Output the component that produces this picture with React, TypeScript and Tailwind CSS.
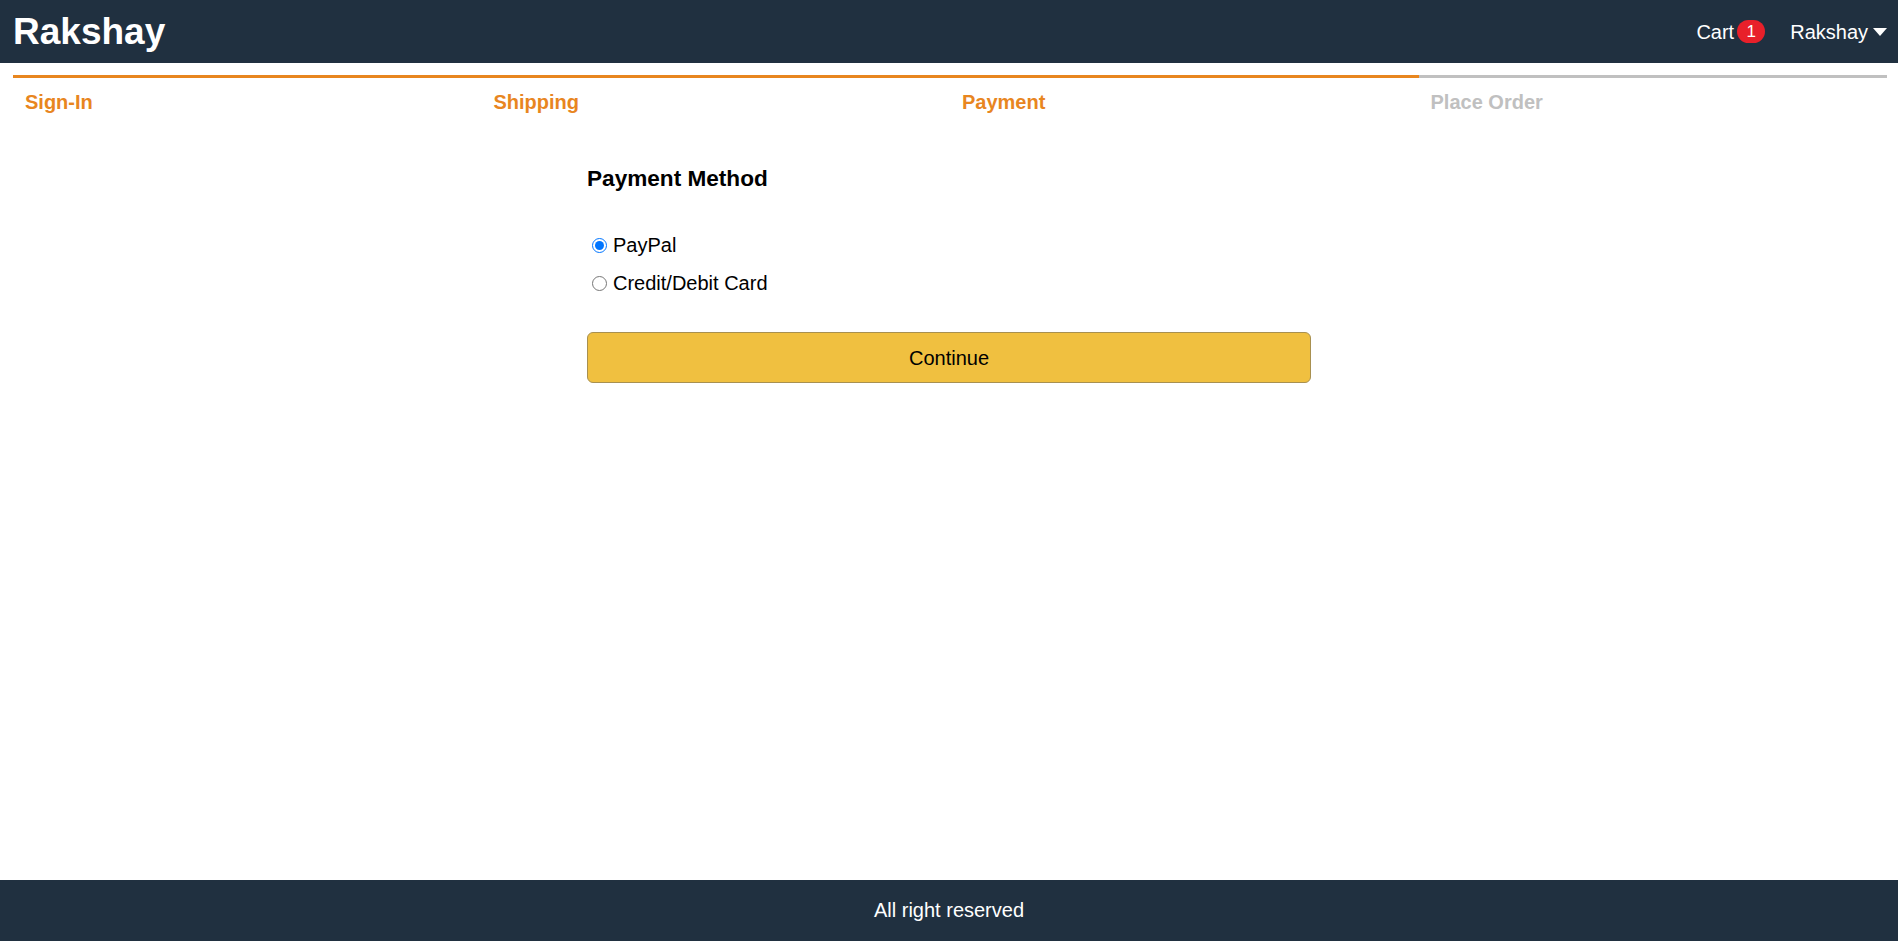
import React, { useState } from 'react';

const steps = [
  { label: 'Sign-In', active: true },
  { label: 'Shipping', active: true },
  { label: 'Payment', active: true },
  { label: 'Place Order', active: false },
];

const App: React.FC = () => {
  const [method, setMethod] = useState('PayPal');

  return (
    <div className="min-h-screen flex flex-col bg-white text-[20px] text-black font-['Liberation_Sans',Arial,sans-serif]">
      {/* Header */}
      <header className="h-[63px] bg-[#203040] flex items-center justify-between pl-[13px] pr-[11px]">
        <a href="#" className="text-white font-bold text-[37px]">
          Rakshay
        </a>
        <div className="flex items-center text-white leading-[22px]">
          <a href="#" className="flex items-center">
            Cart
            <span className="ml-[3px] w-[28px] h-[23px] rounded-full bg-[#e8202a] text-white text-[17px] flex items-center justify-center">
              1
            </span>
          </a>
          <a href="#" className="flex items-center ml-[25px]">
            Rakshay
            <svg className="ml-[5px] w-[14px] h-[8px]" viewBox="0 0 14 8" fill="currentColor">
              <path d="M0 0h14L7 8z" />
            </svg>
          </a>
        </div>
      </header>

      {/* Checkout Steps */}
      <div className="flex ml-[13px] mr-[11px] mt-[12px]">
        {steps.map((s) => (
          <div
            key={s.label}
            className={
              s.active
                ? 'flex-1 border-t-[3px] border-[#e8861f] text-[#e8861f] font-bold pt-[13px] pl-[12px] leading-[22px]'
                : 'flex-1 border-t-[3px] border-[#c0c0c0] text-[#c0c0c0] font-bold pt-[13px] pl-[12px] leading-[22px]'
            }
          >
            {s.label}
          </div>
        ))}
      </div>

      {/* Payment form */}
      <main className="flex-1">
        <form className="w-[724px] mx-auto mt-[53px]" onSubmit={(e) => e.preventDefault()}>
          <h1 className="text-[22.6px] font-bold leading-[26px]">Payment Method</h1>
          <div className="mt-[42px] flex flex-col gap-[15px]">
            {['PayPal', 'Credit/Debit Card'].map((m) => (
              <label key={m} className="flex items-center leading-[23px]">
                <input
                  type="radio"
                  name="paymentMethod"
                  checked={method === m}
                  onChange={() => setMethod(m)}
                  className="ml-[5px] mr-[6px] w-[15px] h-[15px]"
                />
                {m}
              </label>
            ))}
          </div>
          <button
            type="submit"
            className="mt-[37px] w-full h-[51px] bg-[#f0c040] border border-[#a89050] rounded-[6px] text-black"
          >
            Continue
          </button>
        </form>
      </main>

      {/* Footer */}
      <footer className="h-[61px] bg-[#203040] text-white flex items-center justify-center pb-[2px]">
        All right reserved
      </footer>
    </div>
  );
};

export default App;
